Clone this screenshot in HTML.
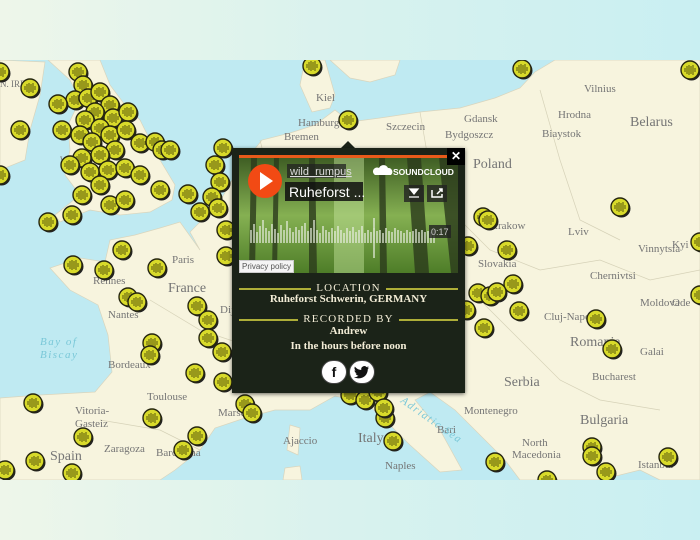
<!DOCTYPE html>
<html><head><meta charset="utf-8">
<style>
html,body{margin:0;padding:0;width:700px;height:540px;overflow:hidden;background:#e3f5ee;}
.band{position:absolute;left:0;width:700px;height:60px;background:linear-gradient(90deg,#eef6ea,#d8f2ee 50%,#c9eff2);}
#map{position:absolute;left:0;top:60px;width:700px;height:420px;}
.lbl{font-family:"Liberation Serif",serif;fill:#757575;font-size:11px;}
.big{font-size:14px;}
.sea{font-family:"Liberation Serif",serif;fill:#7ac8d8;font-style:italic;font-size:11px;letter-spacing:1.5px;}
#pop{position:absolute;left:232px;top:148px;width:233px;height:245px;background:#1b2318;box-shadow:0 1px 4px rgba(0,0,0,.6);font-family:"Liberation Serif",serif;color:#f2ecd6;}
#tri{position:absolute;left:340px;top:141px;width:0;height:0;border-left:8px solid transparent;border-right:8px solid transparent;border-bottom:8px solid #1b2318;}
#close{position:absolute;right:0;top:0;width:18px;height:17px;background:#000;color:#fff;font:bold 12px "Liberation Sans",sans-serif;text-align:center;line-height:17px;}
#img{position:absolute;left:7px;top:7px;width:219px;height:118px;overflow:hidden;border-top:3px solid #e85a1a;box-sizing:border-box;}
.head{position:absolute;left:7px;width:219px;height:14px;font-size:11px;letter-spacing:1.2px;text-align:center;}
.head span{background:#1b2318;padding:0 5px;position:relative;}
.head:before{content:"";position:absolute;left:0;right:0;top:6px;border-top:2px solid #aeae38;}
.txt{position:absolute;left:0;width:233px;text-align:center;font-size:11px;font-weight:bold;}
.sb{position:absolute;top:212px;width:24px;height:22px;border-radius:12px;background:#fff;border:1px solid #444;}
</style></head><body>
<div class="band" style="top:0"></div>
<div class="band" style="top:480px"></div>
<svg id="map" width="700" height="420" viewBox="0 60 700 420">
<defs>
<g id="m"><circle cx="1.5" cy="1.5" r="9" fill="#222"/><circle r="9" fill="#d8da2a" stroke="#262610" stroke-width="1.4"/>
<path d="M-5 -2v4M-3 -4v8M-1 -5v10M1 -4v8M3 -5v10M5 -2v4" stroke="#6e6e12" stroke-width="1.2"/></g>
</defs>
<rect x="0" y="60" width="700" height="420" fill="#bfeaf2"/>
<g fill="#f7f4de" stroke="#d9d5bd" stroke-width="0.7">
<path d="M0 60 L45 62 L40 95 L30 130 L25 160 L0 170Z"/>
<path d="M48 60 L100 60 L110 85 L125 105 L140 120 L150 140 L160 160 L175 185 L172 200 L150 212 L120 215 L90 210 L60 222 L55 215 L80 195 L65 175 L70 150 L68 125 L80 100 L70 80Z"/>
<path d="M330 60 L400 60 L395 75 L370 82 L350 78Z"/>
<path d="M305 60 L325 60 L335 95 L330 108 L312 112 L300 85Z"/>
<path d="M200 250 L190 232 L200 222 L215 210 L235 175 L250 155 L262 140 L290 133 L315 125 L335 110 L350 122 L380 118 L420 112 L460 108 L495 98 L520 88 L535 72 L555 60 L700 60 L700 480 L660 480 L640 470 L600 480 L520 480 L505 460 L480 435 L455 410 L430 392 L415 400 L440 430 L462 470 L440 472 L410 445 L385 420 L365 402 L335 396 L310 410 L275 410 L245 418 L215 428 L200 450 L175 470 L160 480 L0 480 L0 398 L40 395 L95 392 L112 372 L108 335 L98 305 L70 290 L50 268 L80 258 L105 262 L110 240 L135 235 L160 228 L180 222Z"/>
<path d="M290 425 L300 428 L298 455 L287 450Z"/>
<path d="M285 468 L300 466 L302 480 L283 480Z"/>
</g>
<g fill="none" stroke="#d6d2b8" stroke-width="0.7">
<path d="M260 140 L275 200 L300 240 L320 270 L330 300"/>
<path d="M420 112 L430 170 L460 220 L490 250 L540 270 L600 260 L650 280 L700 270"/>
<path d="M540 90 L560 160 L580 220 L620 240"/>
<path d="M150 300 L200 330 L260 350 L300 380"/>
<path d="M480 300 L520 340 L560 380 L600 400 L660 410"/>
<path d="M100 420 L160 430 L200 450"/>
</g>
<g class="lbl">
<text x="316" y="101">Kiel</text><text x="298" y="126">Hamburg</text><text x="284" y="140">Bremen</text>
<text x="386" y="130">Szczecin</text><text x="464" y="122">Gdansk</text><text x="445" y="138">Bydgoszcz</text>
<text x="584" y="92">Vilnius</text><text x="558" y="118">Hrodna</text><text x="542" y="137">Biaystok</text>
<text x="565" y="60">Lithuania</text><text class="big" x="630" y="126">Belarus</text>
<text class="big" x="473" y="168">Poland</text><text x="490" y="229">Krakow</text><text x="568" y="235">Lviv</text>
<text x="638" y="252">Vinnytsia</text><text x="478" y="267">Slovakia</text><text x="590" y="279">Chernivtsi</text>
<text x="640" y="306">Moldova</text><text x="544" y="320">Cluj-Napoca</text><text class="big" x="570" y="346">Romania</text>
<text x="640" y="355">Galai</text><text x="592" y="380">Bucharest</text><text class="big" x="504" y="386">Serbia</text>
<text x="464" y="414">Montenegro</text><text class="big" x="580" y="424">Bulgaria</text><text x="522" y="446">North</text><text x="512" y="458">Macedonia</text>
<text x="437" y="433">Bari</text><text x="385" y="469">Naples</text><text class="big" x="358" y="442">Italy</text>
<text x="283" y="444">Ajaccio</text><text x="147" y="400">Toulouse</text><text x="108" y="368">Bordeaux</text>
<text x="75" y="414">Vitoria-</text><text x="75" y="427">Gasteiz</text><text x="104" y="452">Zaragoza</text>
<text class="big" x="50" y="460">Spain</text><text x="156" y="456">Barcelona</text><text x="218" y="416">Marseille</text>
<text class="big" x="168" y="292">France</text><text x="172" y="263">Paris</text><text x="93" y="284">Rennes</text>
<text x="108" y="318">Nantes</text><text x="220" y="313">Dijon</text><text x="60" y="163" font-size="9">WALES</text>
<text x="0" y="87" font-size="9">N. IRE</text><text x="672" y="248">Kyi</text><text x="672" y="306">Ode</text>
<text x="638" y="468">Istanbul</text>
</g>
<text class="sea" x="40" y="345">Bay of</text><text class="sea" x="40" y="358">Biscay</text>
<text class="sea" x="400" y="402" transform="rotate(35 400 402)">Adriatic Sea</text>
<g>
<use href="#m" x="0" y="72"/><use href="#m" x="30" y="88"/><use href="#m" x="20" y="130"/><use href="#m" x="78" y="72"/><use href="#m" x="83" y="85"/><use href="#m" x="75" y="100"/><use href="#m" x="58" y="104"/><use href="#m" x="88" y="98"/><use href="#m" x="100" y="92"/><use href="#m" x="110" y="105"/><use href="#m" x="95" y="112"/><use href="#m" x="113" y="118"/><use href="#m" x="128" y="112"/><use href="#m" x="85" y="120"/><use href="#m" x="100" y="128"/><use href="#m" x="62" y="130"/><use href="#m" x="80" y="135"/><use href="#m" x="92" y="142"/><use href="#m" x="110" y="135"/><use href="#m" x="126" y="130"/><use href="#m" x="140" y="143"/><use href="#m" x="155" y="142"/><use href="#m" x="162" y="150"/><use href="#m" x="170" y="150"/><use href="#m" x="115" y="150"/><use href="#m" x="100" y="155"/><use href="#m" x="82" y="158"/><use href="#m" x="70" y="165"/><use href="#m" x="90" y="172"/><use href="#m" x="108" y="170"/><use href="#m" x="125" y="168"/><use href="#m" x="140" y="175"/><use href="#m" x="160" y="190"/><use href="#m" x="100" y="185"/><use href="#m" x="82" y="195"/><use href="#m" x="110" y="205"/><use href="#m" x="125" y="200"/><use href="#m" x="72" y="215"/><use href="#m" x="48" y="222"/><use href="#m" x="0" y="175"/>
<use href="#m" x="223" y="148"/><use href="#m" x="215" y="165"/><use href="#m" x="220" y="182"/><use href="#m" x="212" y="197"/><use href="#m" x="200" y="212"/><use href="#m" x="188" y="194"/><use href="#m" x="218" y="208"/><use href="#m" x="226" y="230"/><use href="#m" x="226" y="256"/>
<use href="#m" x="73" y="265"/><use href="#m" x="104" y="270"/><use href="#m" x="122" y="250"/><use href="#m" x="157" y="268"/><use href="#m" x="128" y="297"/><use href="#m" x="137" y="302"/><use href="#m" x="197" y="306"/><use href="#m" x="208" y="320"/><use href="#m" x="152" y="343"/><use href="#m" x="150" y="355"/><use href="#m" x="195" y="373"/><use href="#m" x="208" y="338"/><use href="#m" x="222" y="352"/><use href="#m" x="223" y="382"/><use href="#m" x="245" y="404"/><use href="#m" x="252" y="413"/><use href="#m" x="152" y="418"/><use href="#m" x="197" y="436"/><use href="#m" x="183" y="450"/><use href="#m" x="83" y="437"/><use href="#m" x="33" y="403"/><use href="#m" x="35" y="461"/><use href="#m" x="72" y="473"/><use href="#m" x="5" y="470"/>
<use href="#m" x="350" y="395"/><use href="#m" x="365" y="400"/><use href="#m" x="378" y="392"/><use href="#m" x="385" y="418"/><use href="#m" x="393" y="441"/><use href="#m" x="384" y="408"/>
<use href="#m" x="348" y="120"/><use href="#m" x="312" y="66"/><use href="#m" x="483" y="217"/><use href="#m" x="488" y="220"/><use href="#m" x="507" y="250"/><use href="#m" x="468" y="246"/><use href="#m" x="513" y="284"/><use href="#m" x="478" y="293"/><use href="#m" x="490" y="296"/><use href="#m" x="497" y="292"/><use href="#m" x="519" y="311"/><use href="#m" x="484" y="328"/><use href="#m" x="466" y="310"/><use href="#m" x="596" y="319"/><use href="#m" x="612" y="349"/><use href="#m" x="620" y="207"/><use href="#m" x="522" y="69"/><use href="#m" x="690" y="70"/><use href="#m" x="495" y="462"/><use href="#m" x="547" y="480"/><use href="#m" x="592" y="447"/><use href="#m" x="592" y="456"/><use href="#m" x="606" y="472"/><use href="#m" x="668" y="457"/><use href="#m" x="700" y="242"/><use href="#m" x="700" y="295"/>
</g>
</svg>
<div id="tri"></div>
<div id="pop">
<div id="img">
<svg width="219" height="115" viewBox="0 0 219 115" style="display:block">
<defs><linearGradient id="fg" x1="0" y1="0" x2="0" y2="1"><stop offset="0" stop-color="#3f5e24"/><stop offset=".5" stop-color="#85b052"/><stop offset="1" stop-color="#4e7d28"/></linearGradient></defs>
<rect width="219" height="115" fill="url(#fg)"/>
<rect x="95" y="0" width="30" height="115" fill="#c8e6a0" opacity=".45"/>
<path d="M168 0 L182 0 L190 115 L176 115Z M70 0 L76 0 L78 115 L70 115Z M35 0 L40 0 L38 115 L33 115Z M12 0 L18 0 L16 115 L10 115Z M200 0 L219 0 L219 115 L212 115Z M140 0 L146 0 L148 115 L141 115Z" fill="#2b3a1c" opacity=".8"/>
<g stroke="#e8eee0" stroke-width="1.5" opacity=".85">
<path d="M12 85V72M15 85V66M18 85V74M21 85V68M24 85V62M27 85V70M30 85V73M33 85V66M36 85V71M39 85V75M42 85V67M45 85V72M48 85V63M51 85V70M54 85V74M57 85V69M60 85V72M63 85V68M66 85V65M69 85V73M72 85V70M75 85V62M78 85V72M81 85V75M84 85V68M87 85V72M90 85V74M93 85V70M96 85V73M99 85V68M102 85V72M105 85V75M108 85V70M111 85V73M114 85V69M117 85V74M120 85V72M123 85V68M126 85V75M129 85V72M132 85V74M135 85V70M138 85V73M141 85V72M144 85V75M147 85V70M150 85V73M153 85V74M156 85V70M159 85V72M162 85V73M165 85V75M168 85V72M171 85V74M174 85V73M177 85V71M180 85V74M183 85V72M186 85V74M189 85V73M192 85V74M195 85V72"/>
<path d="M135 100V60" />
</g>
<circle cx="26" cy="23" r="17" fill="#f24a14"/>
<path d="M21 14 L34 23 L21 32Z" fill="#fff"/>
<rect x="48" y="6" width="59" height="14" fill="#222" opacity=".75"/>
<text x="51" y="17" font-family="Liberation Sans,sans-serif" font-size="11" fill="#ddd" text-decoration="underline">wild_rumpus</text>
<rect x="46" y="24" width="78" height="19" fill="#111" opacity=".85"/>
<text x="50" y="39" font-family="Liberation Sans,sans-serif" font-size="14" fill="#fff">Ruheforst ...</text>
<path d="M136 17 h16 a4 4 0 0 0 -3 -7 a5 5 0 0 0 -9 0 a4 4 0 0 0 -4 7z" fill="#fff"/>
<text x="154" y="17" font-family="Liberation Sans,sans-serif" font-size="8.5" font-weight="bold" fill="#fff">SOUNDCLOUD</text>
<rect x="165" y="27" width="20" height="17" fill="#222" opacity=".8"/>
<path d="M171 31h8l-4 5z M170 39h10" fill="#fff" stroke="#fff" stroke-width="1.3"/>
<rect x="188" y="27" width="20" height="17" fill="#222" opacity=".8"/>
<path d="M193 32v7h10v-3 M198 36l5-5 M200 31h3v3" fill="none" stroke="#fff" stroke-width="1.5"/>
<rect x="190" y="67" width="22" height="13" fill="#222" opacity=".8"/>
<text x="192" y="77" font-family="Liberation Sans,sans-serif" font-size="9" fill="#ccc">0:17</text>
</svg>
</div>
<div style="position:absolute;left:7px;top:112px;width:55px;height:13px;background:#f4f4f4;border:1px solid #ccc;box-sizing:border-box;font:8px 'Liberation Sans',sans-serif;color:#555;line-height:11px;text-align:center;">Privacy policy</div>
<div id="close">✕</div>
<div class="head" style="top:134px"><span>LOCATION</span></div>
<div class="txt" style="top:145px">Ruheforst Schwerin, GERMANY</div>
<div class="head" style="top:165px"><span>RECORDED BY</span></div>
<div class="txt" style="top:177px">Andrew</div>
<div class="txt" style="top:192px">In the hours before noon</div>
<div class="sb" style="left:89px"><div style="font:bold 14px 'Liberation Sans',sans-serif;color:#111;text-align:center;line-height:22px">f</div></div>
<div class="sb" style="left:117px"><svg width="24" height="22" viewBox="0 0 24 22"><path d="M19 6.5c-.6.3-1.2.4-1.8.5.7-.4 1.1-1 1.4-1.7-.6.4-1.3.6-2 .8a3.1 3.1 0 0 0-5.3 2.8C8.7 8.8 6.4 7.5 4.9 5.6c-.8 1.4-.4 3.2 1 4.1-.5 0-1-.2-1.4-.4 0 1.5 1.1 2.8 2.5 3.1-.5.1-1 .2-1.4.1.4 1.2 1.6 2.1 2.9 2.2A6.3 6.3 0 0 1 4 16c1.4.9 3 1.4 4.8 1.4 5.8 0 9-4.8 9-9v-.4c.5-.4 1-.9 1.2-1.5z" fill="#111"/></svg></div>
</div>
</body></html>
